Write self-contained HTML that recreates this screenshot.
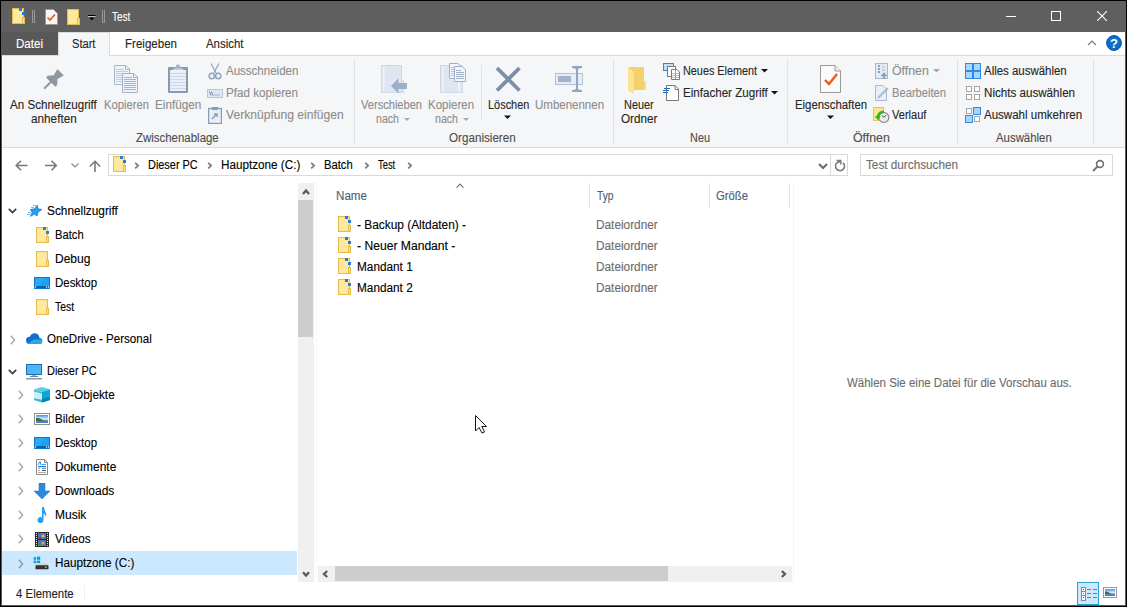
<!DOCTYPE html>
<html><head><meta charset="utf-8"><style>
html,body{margin:0;padding:0;width:1127px;height:607px;overflow:hidden;background:#000;}
body>div,body>span,body>svg{position:absolute;}
.t{font-family:"Liberation Sans",sans-serif;white-space:pre;line-height:14px;transform-origin:0 0;-webkit-text-stroke:0.12px currentColor;}
</style></head><body>
<div style="left:1px;top:1px;width:1125px;height:605px;background:#fff;box-sizing:border-box;border:1px solid #5c5c5c"></div>
<div style="left:1px;top:1px;width:1125px;height:31px;background:#5f5f5f;"></div>
<svg style="left:12px;top:8px" width="14" height="16" viewBox="0 0 14 16"><rect x="0.5" y="0.5" width="11" height="15" fill="#fde488" stroke="#e5bd4f"/><rect x="1.5" y="1.5" width="9" height="13" fill="#ffe9a0"/><rect x="10.5" y="9.5" width="2" height="6" fill="#fbe08a" stroke="#e5bd4f"/><rect x="7" y="0" width="3" height="3" fill="#2a7ad6"/><rect x="10" y="4" width="3" height="3" fill="#2a7ad6"/></svg>
<div style="left:32px;top:10px;width:3px;height:13px;background:transparent;box-sizing:border-box;border:1px solid #9a9a9a;border-top:none;border-radius:0 0 2px 2px"></div>
<svg style="left:45px;top:9px" width="13" height="16" viewBox="0 0 13 16"><path d="M0.5 0.5H8.5L12.5 4.5V15.5H0.5Z" fill="#f7f7f7" stroke="#9a9a9a"/><path d="M2.5 8.5L5 11L10 5.5" fill="none" stroke="#e8562a" stroke-width="1.6"/></svg>
<svg style="left:67px;top:9px" width="14" height="16" viewBox="0 0 14 16"><rect x="0.5" y="0.5" width="11" height="15" fill="#fde488" stroke="#e5bd4f"/><rect x="1.5" y="1.5" width="9" height="13" fill="#ffe9a0"/><rect x="10.5" y="9.5" width="2" height="6" fill="#fbe08a" stroke="#e5bd4f"/></svg>
<svg style="left:88px;top:14px" width="8" height="9" viewBox="0 0 8 9"><rect x="0" y="1" width="7.5" height="1" fill="#000"/><rect x="0" y="2" width="7.5" height="1" fill="#c8c8c8"/><path d="M0.8 3.2H6.8L3.8 7Z" fill="#000" stroke="#bbb" stroke-width="0.5" stroke-dasharray="0.8 0.8"/></svg>
<div style="left:102px;top:10px;width:3px;height:13px;background:transparent;box-sizing:border-box;border:1px solid #9a9a9a;border-top:none;border-radius:0 0 2px 2px"></div>
<span class="t" style="left:112.00px;top:10px;color:#fff;font-size:12px;transform:scaleX(0.8261)">Test</span>
<div style="left:1006px;top:16px;width:10px;height:1px;background:#fff;"></div>
<div style="left:1051px;top:11px;width:10px;height:10px;background:transparent;box-sizing:border-box;border:1px solid #fff"></div>
<svg style="left:1097px;top:11px" width="10" height="10" viewBox="0 0 10 10"><path d="M0 0L10 10M10 0L0 10" stroke="#fff" stroke-width="1.1"/></svg>
<div style="left:2px;top:32px;width:56px;height:23px;background:#585858;"></div>
<span class="t" style="left:16.00px;top:37px;color:#fff;font-size:12px;transform:scaleX(0.9643)">Datei</span>
<div style="left:58px;top:32px;width:52px;height:24px;background:#f5f6f7;box-sizing:border-box;border:1px solid #dadbdc;border-bottom:none"></div>
<span class="t" style="left:72.00px;top:37px;color:#262626;font-size:12px;transform:scaleX(0.9231)">Start</span>
<span class="t" style="left:125.00px;top:37px;color:#262626;font-size:12px;transform:scaleX(0.9630)">Freigeben</span>
<span class="t" style="left:206.00px;top:37px;color:#262626;font-size:12px;transform:scaleX(0.9500)">Ansicht</span>
<div style="left:2px;top:55px;width:56px;height:1px;background:#dadbdc;"></div>
<div style="left:110px;top:55px;width:1015px;height:1px;background:#dadbdc;"></div>
<div style="left:2px;top:56px;width:1123px;height:91px;background:#f5f6f7;"></div>
<div style="left:2px;top:147px;width:1123px;height:1px;background:#dadbdc;"></div>
<svg style="left:1087px;top:39px" width="10" height="7" viewBox="0 0 10 7"><path d="M1 6L5 2L9 6" fill="none" stroke="#7a7a7a" stroke-width="1.2"/></svg>
<svg style="left:1105px;top:34px" width="18" height="18" viewBox="0 0 18 18"><circle cx="9" cy="9" r="7.4" fill="#0a6ccb" stroke="#0b4f9a" stroke-width="1"/><text x="9" y="14" font-family="Liberation Sans" font-weight="bold" font-size="13" fill="#fff" text-anchor="middle">?</text></svg>
<div style="left:354px;top:59px;width:1px;height:85px;background:#e2e3e4;"></div>
<div style="left:613px;top:59px;width:1px;height:85px;background:#e2e3e4;"></div>
<div style="left:787px;top:59px;width:1px;height:85px;background:#e2e3e4;"></div>
<div style="left:957px;top:59px;width:1px;height:85px;background:#e2e3e4;"></div>
<div style="left:1093px;top:59px;width:1px;height:85px;background:#e2e3e4;"></div>
<div style="left:481px;top:65px;width:1px;height:55px;background:#e2e3e4;"></div>
<svg style="left:38px;top:62px" width="32" height="32" viewBox="0 0 32 32"><g transform="translate(22.6,10.2) rotate(45)" fill="#8e979f"><path d="M-4.6 0H4.6L2.6 7L6.6 11.5V14H-6.6V11.5L-2.6 7Z"/><rect x="-1" y="13" width="2" height="10.5" rx="0.8"/></g></svg>
<span class="t" style="left:10.00px;top:98px;color:#262626;font-size:12px;transform:scaleX(0.9667)">An Schnellzugriff</span>
<span class="t" style="left:31.00px;top:112px;color:#262626;font-size:12px;transform:scaleX(0.9787)">anheften</span>
<svg style="left:113px;top:64px" width="26" height="30" viewBox="0 0 26 30"><path d="M1.5 1.5H13L16.5 5V20.5H1.5Z" fill="#eef3fb" stroke="#a8b6cb"/><path d="M12.5 1.5V5.5H16.5" fill="none" stroke="#a8b6cb"/><path d="M3 5.5H11M3 7.5H15M3 9.5H15M3 11.5H15M3 13.5H15M3 15.5H15M3 17.5H15" stroke="#c3cede"/><path d="M9.5 9.5H21L24.5 13V28.5H9.5Z" fill="#eef3fb" stroke="#a3b2c8"/><path d="M20.5 9.5V13.5H24.5" fill="none" stroke="#a3b2c8"/><path d="M11 13.5H19M11 15.5H23M11 17.5H23M11 19.5H23M11 21.5H23M11 23.5H23M11 25.5H23" stroke="#a6b5ca"/></svg>
<span class="t" style="left:104.00px;top:98px;color:#8d8d8d;font-size:12px;transform:scaleX(0.9375)">Kopieren</span>
<svg style="left:168px;top:64px" width="20" height="30" viewBox="0 0 20 30"><rect x="0" y="3" width="20" height="26" rx="1" fill="#8b9ab3"/><rect x="2" y="6" width="16" height="21" fill="#eaf0fa"/><path d="M2 9.5H18M2 12.5H18M2 15.5H18M2 18.5H18M2 21.5H18M2 24.5H18" stroke="#cdd7e6"/><path d="M4 6L7 4H13L16 6Z" fill="#c3cedf"/><rect x="8" y="0.5" width="4" height="4" rx="1.5" fill="#a6b3c8"/></svg>
<span class="t" style="left:155.00px;top:98px;color:#8d8d8d;font-size:12px;transform:scaleX(0.9787)">Einfügen</span>
<svg style="left:208px;top:63px" width="15" height="17" viewBox="0 0 15 17"><path d="M3 0.5L8.2 10M11 0.5L5.8 10" stroke="#9aa8bf" stroke-width="1.3"/><ellipse cx="3.8" cy="13" rx="2.6" ry="2.8" fill="none" stroke="#95a4bc" stroke-width="1.6"/><ellipse cx="10.2" cy="13" rx="2.6" ry="2.8" fill="none" stroke="#95a4bc" stroke-width="1.6"/></svg>
<span class="t" style="left:226.00px;top:64px;color:#8d8d8d;font-size:12px;transform:scaleX(0.9600)">Ausschneiden</span>
<svg style="left:207px;top:89px" width="16" height="9" viewBox="0 0 16 9"><rect x="0.5" y="0.5" width="15" height="8" fill="#dfe7f2" stroke="#b9c6d8"/><path d="M2.5 2.5L4 6.5M4.5 2.5L6 6.5" stroke="#6f809c" stroke-width="0.9"/><path d="M7.5 6H8.5M9.5 6H10.5M11.5 6H12.5" stroke="#6f809c"/></svg>
<span class="t" style="left:226.00px;top:86px;color:#8d8d8d;font-size:12px;transform:scaleX(0.9730)">Pfad kopieren</span>
<svg style="left:208px;top:107px" width="14" height="17" viewBox="0 0 14 17"><rect x="0.5" y="1.5" width="13" height="15" fill="#e8eef7" stroke="#8b9ab3" stroke-width="1.4"/><rect x="4" y="0" width="6" height="3" fill="#8b9ab3"/><path d="M4 12L8 8M6 7H9V10" stroke="#8b9ab3" stroke-width="1.4" fill="none"/></svg>
<span class="t" style="left:226.00px;top:108px;color:#8d8d8d;font-size:12px;transform:scaleX(1.0085)">Verknüpfung einfügen</span>
<span class="t" style="left:136.00px;top:131px;color:#4d4d4d;font-size:12px;transform:scaleX(0.9540)">Zwischenablage</span>
<svg style="left:381px;top:64px" width="27" height="31" viewBox="0 0 27 31"><rect x="0.5" y="1.5" width="20" height="27" fill="#dfe6f2" stroke="#cfd8e6"/><rect x="2" y="2" width="1.5" height="26" fill="#eef2f8"/><rect x="20.5" y="16.5" width="2" height="12" fill="#e3e9f3" stroke="#cfd8e6"/><path d="M10 22L17.5 14.3V19H26V25H17.5V29.6Z" fill="#9cafc9"/></svg>
<span class="t" style="left:361.00px;top:98px;color:#8d8d8d;font-size:12px;transform:scaleX(0.9242)">Verschieben</span>
<span class="t" style="left:376.00px;top:112px;color:#8d8d8d;font-size:12px;transform:scaleX(0.8846)">nach</span>
<svg style="left:404px;top:118px" width="6" height="4" viewBox="0 0 6 4"><path d="M0 0H6L3 3Z" fill="#a8a8a8"/></svg>
<svg style="left:440px;top:63px" width="27" height="31" viewBox="0 0 27 31"><rect x="0.5" y="2.5" width="22" height="27" fill="#dfe6f2" stroke="#cfd8e6"/><rect x="2" y="3" width="1.5" height="26" fill="#eef2f8"/><rect x="18" y="3" width="2" height="26" fill="#eef2f8"/><path d="M9.5 0.5H18L20.5 3V15.5H9.5Z" fill="#f4f6fb" stroke="#9fb0c7"/><path d="M11 4.5H17M11 6.5H19M11 8.5H19M11 10.5H19M11 12.5H19" stroke="#b5c2d4"/><path d="M14.5 3.5H22L25.5 7V18.5H14.5Z" fill="#f4f6fb" stroke="#9fb0c7"/><path d="M16 7.5H21M16 9.5H24M16 11.5H24M16 13.5H24M16 15.5H24" stroke="#9fb0c7"/></svg>
<span class="t" style="left:428.00px;top:98px;color:#8d8d8d;font-size:12px;transform:scaleX(0.9583)">Kopieren</span>
<span class="t" style="left:435.00px;top:112px;color:#8d8d8d;font-size:12px;transform:scaleX(0.8846)">nach</span>
<svg style="left:463px;top:118px" width="6" height="4" viewBox="0 0 6 4"><path d="M0 0H6L3 3Z" fill="#a8a8a8"/></svg>
<svg style="left:494px;top:65px" width="28" height="28" viewBox="0 0 28 28"><path d="M3 3L25.5 25.5M25.5 3L3 25.5" stroke="#7f8ea8" stroke-width="3.8"/></svg>
<span class="t" style="left:488.00px;top:98px;color:#262626;font-size:12px;transform:scaleX(0.9111)">Löschen</span>
<svg style="left:504px;top:115px" width="7" height="5" viewBox="0 0 7 5"><path d="M0 0.5H7L3.5 4Z" fill="#111"/></svg>
<svg style="left:555px;top:65px" width="29" height="28" viewBox="0 0 29 28"><rect x="0.5" y="8.5" width="27" height="11" fill="#e6ecf6" stroke="#b3c1d6"/><rect x="3" y="11" width="13" height="6" fill="#a3b3cb"/><path d="M17 2H27M17 26H27M22 4V24M17 2Q22 2 22 5Q22 2 27 2M17 26Q22 26 22 23Q22 26 27 26" fill="none" stroke="#95a5bf" stroke-width="2"/></svg>
<span class="t" style="left:535.00px;top:98px;color:#8d8d8d;font-size:12px;transform:scaleX(0.9583)">Umbenennen</span>
<span class="t" style="left:449.00px;top:131px;color:#4d4d4d;font-size:12px;transform:scaleX(0.9710)">Organisieren</span>
<svg style="left:627px;top:66px" width="20" height="29" viewBox="0 0 20 29"><rect x="1" y="1" width="16" height="23" fill="#f3d16b"/><rect x="17" y="15" width="2" height="9" fill="#f9dc7c"/><path d="M1 1L7 6V28L1 25Z" fill="#fbe390"/></svg>
<span class="t" style="left:624.00px;top:98px;color:#262626;font-size:12px;transform:scaleX(0.9091)">Neuer</span>
<span class="t" style="left:621.00px;top:112px;color:#262626;font-size:12px;transform:scaleX(0.9730)">Ordner</span>
<svg style="left:662px;top:62px" width="18" height="18" viewBox="0 0 18 18"><rect x="1.5" y="1.5" width="10" height="7" fill="#bfe0f7" stroke="#3c83c8"/><rect x="5.5" y="4.5" width="8" height="10" fill="#fafafa" stroke="#7a7a7a"/><path d="M9.5 7.5H15L17.5 10V17.5H9.5Z" fill="#fff" stroke="#7a7a7a"/><path d="M10 11.5H17M10 13.5H17M10 15.5H17" stroke="#9cc3ea"/><path d="M13.5 8V17" stroke="#f08080"/></svg>
<span class="t" style="left:683.00px;top:64px;color:#262626;font-size:12px;transform:scaleX(0.9036)">Neues Element</span>
<svg style="left:761px;top:69px" width="7" height="4" viewBox="0 0 7 4"><path d="M0 0H7L3.5 3.5Z" fill="#111"/></svg>
<svg style="left:662px;top:84px" width="17" height="17" viewBox="0 0 17 17"><path d="M4.5 1.5H13L16.5 5V16.5H4.5Z" fill="#fff" stroke="#7a7a7a"/><path d="M13 1.5V5.5H16.5" fill="none" stroke="#7a7a7a"/><path d="M2 4.5H8M1 6.5H7M1 8.5H6" stroke="#1f6cc0" stroke-width="1"/></svg>
<span class="t" style="left:683.00px;top:86px;color:#262626;font-size:12px;transform:scaleX(0.9659)">Einfacher Zugriff</span>
<svg style="left:771px;top:91px" width="7" height="4" viewBox="0 0 7 4"><path d="M0 0H7L3.5 3.5Z" fill="#111"/></svg>
<span class="t" style="left:690.00px;top:131px;color:#4d4d4d;font-size:12px;transform:scaleX(0.9091)">Neu</span>
<svg style="left:820px;top:65px" width="22" height="29" viewBox="0 0 22 29"><path d="M0.5 0.5H15L20.5 6V27.5H0.5Z" fill="#fafafa" stroke="#9a9a9a"/><path d="M15 0.5V6H20.5" fill="#eee" stroke="#9a9a9a"/><path d="M5 15L9 19L17 9" fill="none" stroke="#ea5a1d" stroke-width="2.4"/></svg>
<span class="t" style="left:795.00px;top:98px;color:#262626;font-size:12px;transform:scaleX(0.9474)">Eigenschaften</span>
<svg style="left:827px;top:115px" width="7" height="5" viewBox="0 0 7 5"><path d="M0 0.5H7L3.5 4Z" fill="#111"/></svg>
<svg style="left:875px;top:63px" width="15" height="17" viewBox="0 0 15 17"><rect x="0.5" y="0.5" width="12" height="15" fill="#e4eaf4" stroke="#a9b8cc"/><path d="M3 3H5M3 6H5M3 9H5" stroke="#8fa2bd" stroke-width="2"/><path d="M7 4H10M7 7H10" stroke="#a9b8cc"/><path d="M9 16V11L6.5 13M9 11L11.5 13" stroke="#8fa2bd" stroke-width="2" fill="none"/></svg>
<span class="t" style="left:892.00px;top:64px;color:#8d8d8d;font-size:12px;transform:scaleX(1.0278)">Öffnen</span>
<svg style="left:933px;top:69px" width="7" height="4" viewBox="0 0 7 4"><path d="M0 0H7L3.5 3.5Z" fill="#a8a8a8"/></svg>
<svg style="left:875px;top:85px" width="15" height="16" viewBox="0 0 15 16"><path d="M0.5 0.5H8L11.5 4V15.5H0.5Z" fill="#e8eef7" stroke="#a9b8cc"/><path d="M3 13L13 3" stroke="#a9b8cc" stroke-width="2"/></svg>
<span class="t" style="left:892.00px;top:86px;color:#8d8d8d;font-size:12px;transform:scaleX(0.9310)">Bearbeiten</span>
<svg style="left:872px;top:106px" width="19" height="19" viewBox="0 0 19 19"><rect x="1.5" y="1.5" width="10" height="13" fill="#fde58f" stroke="#eec357"/><circle cx="11.8" cy="11.4" r="5" fill="#ececec" stroke="#8a8a8a" stroke-width="1.2"/><path d="M11.8 11.4L10.2 9.6M11.8 11.4L14 9.2" stroke="#333" stroke-width="0.9"/><path d="M12 5.8Q6.5 6.2 5.8 11" fill="none" stroke="#2db52d" stroke-width="2.4"/><path d="M2.8 10.2H8.8L5.8 14Z" fill="#2db52d"/></svg>
<span class="t" style="left:892.00px;top:108px;color:#262626;font-size:12px;transform:scaleX(0.9211)">Verlauf</span>
<span class="t" style="left:853.00px;top:131px;color:#4d4d4d;font-size:12px;transform:scaleX(1.0278)">Öffnen</span>
<svg style="left:965px;top:63px" width="16" height="16" viewBox="0 0 16 16"><rect x="0.5" y="0.5" width="7" height="7" fill="#a9d5f8" stroke="#2d8ae6"/><rect x="8.5" y="0.5" width="7" height="7" fill="#a9d5f8" stroke="#2d8ae6"/><rect x="0.5" y="8.5" width="7" height="7" fill="#a9d5f8" stroke="#2d8ae6"/><rect x="8.5" y="8.5" width="7" height="7" fill="#a9d5f8" stroke="#2d8ae6"/></svg>
<span class="t" style="left:984.00px;top:64px;color:#262626;font-size:12px;transform:scaleX(0.9540)">Alles auswählen</span>
<svg style="left:965px;top:85px" width="16" height="16" viewBox="0 0 16 16"><rect x="1.5" y="1.5" width="5" height="5" fill="#fff" stroke="#a5a5a5"/><rect x="9.5" y="1.5" width="5" height="5" fill="#fff" stroke="#a5a5a5"/><rect x="1.5" y="9.5" width="5" height="5" fill="#fff" stroke="#a5a5a5"/><rect x="9.5" y="9.5" width="5" height="5" fill="#fff" stroke="#a5a5a5"/></svg>
<span class="t" style="left:984.00px;top:86px;color:#262626;font-size:12px;transform:scaleX(0.9681)">Nichts auswählen</span>
<svg style="left:965px;top:107px" width="16" height="16" viewBox="0 0 16 16"><rect x="1.5" y="1.5" width="5" height="5" fill="#fff" stroke="#a5a5a5"/><rect x="8.5" y="0.5" width="7" height="7" fill="#a9d5f8" stroke="#2d8ae6"/><rect x="0.5" y="8.5" width="7" height="7" fill="#a9d5f8" stroke="#2d8ae6"/><rect x="9.5" y="9.5" width="5" height="5" fill="#fff" stroke="#a5a5a5"/></svg>
<span class="t" style="left:984.00px;top:108px;color:#262626;font-size:12px;transform:scaleX(0.9608)">Auswahl umkehren</span>
<span class="t" style="left:996.00px;top:131px;color:#4d4d4d;font-size:12px;transform:scaleX(0.9492)">Auswählen</span>
<svg style="left:15px;top:160px" width="13" height="11" viewBox="0 0 13 11"><path d="M1 5.5H12.5M6 0.8L1.2 5.5L6 10.2" fill="none" stroke="#7a7a7a" stroke-width="1.6"/></svg>
<svg style="left:45px;top:160px" width="13" height="11" viewBox="0 0 13 11"><path d="M0 5.5H11.5M6.5 0.8L11.3 5.5L6.5 10.2" fill="none" stroke="#7a7a7a" stroke-width="1.6"/></svg>
<svg style="left:71px;top:163px" width="8" height="5" viewBox="0 0 8 5"><path d="M0.5 0.5L4 4L7.5 0.5" fill="none" stroke="#8a8a8a" stroke-width="1.2"/></svg>
<svg style="left:89px;top:160px" width="12" height="12" viewBox="0 0 12 12"><path d="M6 12V1.5M0.8 6.5L6 1.3L11.2 6.5" fill="none" stroke="#7a7a7a" stroke-width="1.6"/></svg>
<div style="left:108px;top:154px;width:740px;height:22px;background:#fff;box-sizing:border-box;border:1px solid #d9d9d9"></div>
<div style="left:830px;top:155px;width:1px;height:20px;background:#d9d9d9;"></div>
<svg style="left:113px;top:156px" width="14" height="16" viewBox="0 0 14 16"><rect x="0.5" y="0.5" width="11" height="15" fill="#fde488" stroke="#e5bd4f"/><rect x="1.5" y="1.5" width="9" height="13" fill="#ffe9a0"/><rect x="10.5" y="9.5" width="2" height="6" fill="#fbe08a" stroke="#e5bd4f"/><rect x="7" y="0" width="3" height="3" fill="#2a7ad6"/><rect x="10" y="4" width="3" height="3" fill="#2a7ad6"/></svg>
<svg style="left:134px;top:162px" width="6" height="8" viewBox="0 0 6 8"><path d="M1.2 0.8L4.2 3.6L1.2 6.4" fill="none" stroke="#7a7a7a" stroke-width="1.7"/></svg>
<svg style="left:207px;top:162px" width="6" height="8" viewBox="0 0 6 8"><path d="M1.2 0.8L4.2 3.6L1.2 6.4" fill="none" stroke="#7a7a7a" stroke-width="1.7"/></svg>
<svg style="left:310px;top:162px" width="6" height="8" viewBox="0 0 6 8"><path d="M1.2 0.8L4.2 3.6L1.2 6.4" fill="none" stroke="#7a7a7a" stroke-width="1.7"/></svg>
<svg style="left:364px;top:162px" width="6" height="8" viewBox="0 0 6 8"><path d="M1.2 0.8L4.2 3.6L1.2 6.4" fill="none" stroke="#7a7a7a" stroke-width="1.7"/></svg>
<svg style="left:407px;top:162px" width="6" height="8" viewBox="0 0 6 8"><path d="M1.2 0.8L4.2 3.6L1.2 6.4" fill="none" stroke="#7a7a7a" stroke-width="1.7"/></svg>
<span class="t" style="left:148.00px;top:158px;color:#000;font-size:12px;transform:scaleX(0.9091)">Dieser PC</span>
<span class="t" style="left:221.00px;top:158px;color:#000;font-size:12px;transform:scaleX(0.9753)">Hauptzone (C:)</span>
<span class="t" style="left:324.00px;top:158px;color:#000;font-size:12px;transform:scaleX(0.9355)">Batch</span>
<span class="t" style="left:378.00px;top:158px;color:#000;font-size:12px;transform:scaleX(0.7826)">Test</span>
<svg style="left:818px;top:163px" width="10" height="7" viewBox="0 0 10 7"><path d="M1 1L5 5L9 1" fill="none" stroke="#6d6d6d" stroke-width="2"/></svg>
<svg style="left:834px;top:159px" width="13" height="13" viewBox="0 0 13 13"><path d="M6 2.6A4.5 4.5 0 1 0 9.2 3.9" fill="none" stroke="#7a7a7a" stroke-width="1.6"/><path d="M2.6 1.6H6.8V5.6" fill="none" stroke="#7a7a7a" stroke-width="1.5"/></svg>
<div style="left:860px;top:154px;width:253px;height:22px;background:#fff;box-sizing:border-box;border:1px solid #d9d9d9"></div>
<span class="t" style="left:866.00px;top:158px;color:#6d6d6d;font-size:12px;transform:scaleX(0.9787)">Test durchsuchen</span>
<svg style="left:1091px;top:159px" width="14" height="14" viewBox="0 0 14 14"><circle cx="9" cy="5" r="3.4" fill="none" stroke="#707070" stroke-width="1.6"/><path d="M6.5 7.5L2 12" stroke="#707070" stroke-width="1.8"/></svg>
<svg style="left:8px;top:208px" width="9" height="6" viewBox="0 0 9 6"><path d="M0.8 0.8L4.5 4.5L8.2 0.8" fill="none" stroke="#3c3c3c" stroke-width="1.7"/></svg>
<svg style="left:26px;top:203px" width="17" height="15" viewBox="0 0 17 15"><path d="M11.4 2L12.07 5.79L16 6.5L12 9.2L11.2 13L8.38 11.34L4.3 13.4L6.18 9.32L4.1 6.5L8.38 5.79Z" fill="#2a9bef" stroke="#1b7fd6" stroke-width="0.7" stroke-linejoin="round"/><path d="M7 2.5H10M5 4.5H8M2 9.5H5M1 11.5H4" stroke="#6ab8f2" stroke-width="0.9"/></svg>
<span class="t" style="left:47.00px;top:204px;color:#000;font-size:12px;transform:scaleX(0.9861)">Schnellzugriff</span>
<svg style="left:36px;top:227px" width="14" height="16" viewBox="0 0 14 16"><rect x="0.5" y="0.5" width="11" height="15" fill="#fde488" stroke="#e5bd4f"/><rect x="1.5" y="1.5" width="9" height="13" fill="#ffe9a0"/><rect x="10.5" y="9.5" width="2" height="6" fill="#fbe08a" stroke="#e5bd4f"/><rect x="7" y="0" width="3" height="3" fill="#2a7ad6"/><rect x="10" y="4" width="3" height="3" fill="#2a7ad6"/></svg>
<span class="t" style="left:55.00px;top:228px;color:#000;font-size:12px;transform:scaleX(0.9355)">Batch</span>
<svg style="left:36px;top:251px" width="14" height="16" viewBox="0 0 14 16"><rect x="0.5" y="0.5" width="11" height="15" fill="#fde488" stroke="#e5bd4f"/><rect x="1.5" y="1.5" width="9" height="13" fill="#ffe9a0"/><rect x="10.5" y="9.5" width="2" height="6" fill="#fbe08a" stroke="#e5bd4f"/></svg>
<span class="t" style="left:55.00px;top:252px;color:#000;font-size:12px;transform:scaleX(1.0000)">Debug</span>
<svg style="left:34px;top:277px" width="16" height="12" viewBox="0 0 16 12"><rect x="0.5" y="0.5" width="15" height="11" fill="#1ea0f5" stroke="#0b78d0"/><path d="M1 1H10L4 11H1Z" fill="#2aa8f7"/><rect x="1" y="9" width="14" height="2" fill="#0b5fa8"/><circle cx="1.5" cy="10" r="0.7" fill="#fff"/><circle cx="12.5" cy="10" r="0.7" fill="#fff"/><circle cx="14.5" cy="10" r="0.7" fill="#fff"/></svg>
<svg style="left:34px;top:437px" width="16" height="12" viewBox="0 0 16 12"><rect x="0.5" y="0.5" width="15" height="11" fill="#1ea0f5" stroke="#0b78d0"/><path d="M1 1H10L4 11H1Z" fill="#2aa8f7"/><rect x="1" y="9" width="14" height="2" fill="#0b5fa8"/><circle cx="1.5" cy="10" r="0.7" fill="#fff"/><circle cx="12.5" cy="10" r="0.7" fill="#fff"/><circle cx="14.5" cy="10" r="0.7" fill="#fff"/></svg>
<span class="t" style="left:55.00px;top:276px;color:#000;font-size:12px;transform:scaleX(0.9545)">Desktop</span>
<svg style="left:36px;top:299px" width="14" height="16" viewBox="0 0 14 16"><rect x="0.5" y="0.5" width="11" height="15" fill="#fde488" stroke="#e5bd4f"/><rect x="1.5" y="1.5" width="9" height="13" fill="#ffe9a0"/><rect x="10.5" y="9.5" width="2" height="6" fill="#fbe08a" stroke="#e5bd4f"/></svg>
<span class="t" style="left:55.00px;top:300px;color:#000;font-size:12px;transform:scaleX(0.8696)">Test</span>
<svg style="left:10px;top:335px" width="6" height="10" viewBox="0 0 6 10"><path d="M0.8 0.8L4.6 5L0.8 9.2" fill="none" stroke="#a6a6a6" stroke-width="1.4"/></svg>
<svg style="left:26px;top:333px" width="17" height="12" viewBox="0 0 17 12"><defs><clipPath id="cl"><circle cx="3.6" cy="7.3" r="3.6"/><circle cx="8.6" cy="5" r="4.8"/><circle cx="13.3" cy="8" r="3"/><rect x="3.6" y="7" width="9.7" height="4"/></clipPath></defs><g clip-path="url(#cl)"><rect x="0" y="0" width="17" height="12" fill="#1070cc"/><path d="M1 11.5L7 6.8Q9 5.8 12 6.5L17 6.5V12H1Z" fill="#2aa6ea"/></g></svg>
<span class="t" style="left:47.00px;top:332px;color:#000;font-size:12px;transform:scaleX(0.9633)">OneDrive - Personal</span>
<svg style="left:8px;top:369px" width="9" height="6" viewBox="0 0 9 6"><path d="M0.8 0.8L4.5 4.5L8.2 0.8" fill="none" stroke="#3c3c3c" stroke-width="1.7"/></svg>
<svg style="left:26px;top:364px" width="16" height="16" viewBox="0 0 16 16"><rect x="0.5" y="0.5" width="15" height="10" fill="#4fb6f5" stroke="#1f6fb0"/><rect x="6" y="11" width="4" height="1" fill="#b0b0b0"/><rect x="4" y="12" width="8" height="1" fill="#6e8098"/><rect x="0" y="14" width="16" height="1.5" fill="#8a98aa"/></svg>
<span class="t" style="left:47.00px;top:364px;color:#000;font-size:12px;transform:scaleX(0.9091)">Dieser PC</span>
<svg style="left:18px;top:390px" width="6" height="10" viewBox="0 0 6 10"><path d="M0.8 0.8L4.6 5L0.8 9.2" fill="none" stroke="#a6a6a6" stroke-width="1.4"/></svg>
<span class="t" style="left:55.00px;top:388px;color:#000;font-size:12px;transform:scaleX(0.9836)">3D-Objekte</span>
<svg style="left:18px;top:414px" width="6" height="10" viewBox="0 0 6 10"><path d="M0.8 0.8L4.6 5L0.8 9.2" fill="none" stroke="#a6a6a6" stroke-width="1.4"/></svg>
<span class="t" style="left:55.00px;top:412px;color:#000;font-size:12px;transform:scaleX(0.9677)">Bilder</span>
<svg style="left:18px;top:438px" width="6" height="10" viewBox="0 0 6 10"><path d="M0.8 0.8L4.6 5L0.8 9.2" fill="none" stroke="#a6a6a6" stroke-width="1.4"/></svg>
<span class="t" style="left:55.00px;top:436px;color:#000;font-size:12px;transform:scaleX(0.9545)">Desktop</span>
<svg style="left:18px;top:462px" width="6" height="10" viewBox="0 0 6 10"><path d="M0.8 0.8L4.6 5L0.8 9.2" fill="none" stroke="#a6a6a6" stroke-width="1.4"/></svg>
<span class="t" style="left:55.00px;top:460px;color:#000;font-size:12px;transform:scaleX(1.0000)">Dokumente</span>
<svg style="left:18px;top:486px" width="6" height="10" viewBox="0 0 6 10"><path d="M0.8 0.8L4.6 5L0.8 9.2" fill="none" stroke="#a6a6a6" stroke-width="1.4"/></svg>
<span class="t" style="left:55.00px;top:484px;color:#000;font-size:12px;transform:scaleX(1.0000)">Downloads</span>
<svg style="left:18px;top:510px" width="6" height="10" viewBox="0 0 6 10"><path d="M0.8 0.8L4.6 5L0.8 9.2" fill="none" stroke="#a6a6a6" stroke-width="1.4"/></svg>
<span class="t" style="left:55.00px;top:508px;color:#000;font-size:12px;transform:scaleX(1.0000)">Musik</span>
<svg style="left:18px;top:534px" width="6" height="10" viewBox="0 0 6 10"><path d="M0.8 0.8L4.6 5L0.8 9.2" fill="none" stroke="#a6a6a6" stroke-width="1.4"/></svg>
<span class="t" style="left:55.00px;top:532px;color:#000;font-size:12px;transform:scaleX(0.9722)">Videos</span>
<svg style="left:34px;top:386px" width="16" height="17" viewBox="0 0 16 17"><path d="M0 3.5L8 1L16 3.5L8 6Z" fill="#58cce2"/><path d="M0 3.5L8 6V16.5L0 14Z" fill="#cdeef6"/><path d="M0 3.5L8 6V7.8L0 5.6Z" fill="#3fc0da"/><path d="M0 12.2L8 13.8V16.5L0 14Z" fill="#3ab6d2"/><path d="M8 6L16 3.5V14L8 16.5Z" fill="#0aa6d6"/><path d="M8 12.8L16 11V14L8 16.5Z" fill="#0a84ae"/></svg>
<svg style="left:34px;top:413px" width="16" height="12" viewBox="0 0 16 12"><defs><linearGradient id="sky" x1="0" y1="0" x2="0" y2="1"><stop offset="0" stop-color="#4a8ee8"/><stop offset="0.5" stop-color="#d8ecf8"/><stop offset="1" stop-color="#5a8ac8"/></linearGradient></defs><rect x="0.5" y="0.5" width="15" height="11" fill="#fff" stroke="#8e8e8e"/><rect x="2" y="2" width="12" height="8" fill="url(#sky)"/><path d="M2 5Q5 4.5 7 6T14 7.5V8H2Z" fill="#3e7048"/><rect x="2" y="8" width="12" height="2" fill="#4f7fc0"/></svg>
<svg style="left:36px;top:459px" width="12" height="16" viewBox="0 0 12 16"><path d="M0.5 0.5H8.5L11.5 3.5V15.5H0.5Z" fill="#fff" stroke="#8a8a8a"/><path d="M8.5 0.5V3.5H11.5" fill="none" stroke="#8a8a8a"/><path d="M2 6L4 2.5L5 6" stroke="#2a8ad8" fill="none"/><rect x="6" y="5" width="4" height="1" fill="#4aa0e0"/><rect x="2" y="7" width="8" height="1.2" fill="#1a7ad0"/><rect x="2" y="9" width="2" height="1" fill="#aaa"/><rect x="6" y="9" width="4" height="1" fill="#5a90e8"/><rect x="2" y="11" width="2" height="1" fill="#aaa"/><rect x="6" y="11" width="4" height="1" fill="#2f5a3a"/><rect x="2" y="13" width="8" height="1" fill="#aaa"/></svg>
<svg style="left:34px;top:483px" width="16" height="16" viewBox="0 0 16 16"><path d="M5 0H11V8H16L8 16L0 8H5Z" fill="#2a8ae0" stroke="#1d6fc0" stroke-width="0.5"/></svg>
<svg style="left:36px;top:507px" width="11" height="16" viewBox="0 0 11 16"><path d="M6 0H8C8 4 11 5 10 10C9.5 8 8 6.5 7.5 6.5V13A3 3 0 1 1 6 10.5Z" fill="#1ea0f5"/></svg>
<svg style="left:35px;top:532px" width="14" height="15" viewBox="0 0 14 15"><rect x="0" y="0" width="14" height="15" fill="#2a2a2a"/><rect x="3" y="1" width="8" height="6" fill="#3f78c8"/><rect x="3" y="8" width="8" height="6" fill="#3f78c8"/><path d="M3 5H7V7H3Z" fill="#c0392b"/><circle cx="8" cy="4" r="1.6" fill="#e5c03a"/><path d="M3 12H6V14H3Z" fill="#4a9a3a"/><circle cx="8" cy="11" r="1.6" fill="#e5a03a"/><path d="M1.5 1V14.5M12.5 1V14.5" stroke="#e8e8e8" stroke-width="1" stroke-dasharray="1 1"/></svg>
<div style="left:2px;top:551px;width:295px;height:24px;background:#cce8ff;"></div>
<svg style="left:18px;top:559px" width="6" height="10" viewBox="0 0 6 10"><path d="M0.8 0.8L4.6 5L0.8 9.2" fill="none" stroke="#8a99a6" stroke-width="1.4"/></svg>
<svg style="left:33px;top:556px" width="17" height="15" viewBox="0 0 17 15"><rect x="0.6" y="1.2" width="2.6" height="2.6" fill="#00a2ed"/><rect x="4" y="0.6" width="3.2" height="3.2" fill="#00a2ed"/><rect x="0.6" y="4.6" width="2.6" height="2.6" fill="#00a2ed"/><rect x="4" y="4.6" width="3.2" height="3.2" fill="#00a2ed"/><path d="M3.5 7H13.5L15.5 9.5H2.5Z" fill="#d4d4d4"/><rect x="2.5" y="9.2" width="13" height="4" rx="0.8" fill="#2e2e2e"/><path d="M3.5 11H11" stroke="#4a4a4a" stroke-width="0.6"/><circle cx="12.8" cy="11.2" r="1" fill="#43e043"/></svg>
<span class="t" style="left:55.00px;top:556px;color:#000;font-size:12px;transform:scaleX(0.9753)">Hauptzone (C:)</span>
<div style="left:298px;top:183px;width:16px;height:399px;background:#f0f0f0;"></div>
<div style="left:298px;top:200px;width:15px;height:137px;background:#cdcdcd;"></div>
<svg style="left:302px;top:188px" width="8" height="8" viewBox="0 0 8 8"><path d="M1 6L4 2.6L7 6" fill="none" stroke="#5a5a5a" stroke-width="2.3"/></svg>
<svg style="left:302px;top:571px" width="8" height="8" viewBox="0 0 8 8"><path d="M1 1.2L4 4.6L7 1.2" fill="none" stroke="#5a5a5a" stroke-width="2.3"/></svg>
<div style="left:316px;top:183px;width:1px;height:399px;background:#f7f7f7;"></div>
<span class="t" style="left:336.00px;top:189px;color:#4c607a;font-size:12px;transform:scaleX(0.9688)">Name</span>
<svg style="left:456px;top:183px" width="8" height="6" viewBox="0 0 8 6"><path d="M0.6 4.6L4 1.2L7.4 4.6" fill="none" stroke="#707070" stroke-width="1.2"/></svg>
<div style="left:589px;top:183px;width:1px;height:25px;background:#e5e5e5;"></div>
<span class="t" style="left:597.00px;top:189px;color:#4c607a;font-size:12px;transform:scaleX(0.8500)">Typ</span>
<div style="left:709px;top:183px;width:1px;height:25px;background:#e5e5e5;"></div>
<span class="t" style="left:716.00px;top:189px;color:#4c607a;font-size:12px;transform:scaleX(0.9412)">Größe</span>
<div style="left:789px;top:183px;width:1px;height:25px;background:#e5e5e5;"></div>
<svg style="left:338px;top:216px" width="14" height="16" viewBox="0 0 14 16"><rect x="0.5" y="0.5" width="11" height="15" fill="#fde488" stroke="#e5bd4f"/><rect x="1.5" y="1.5" width="9" height="13" fill="#ffe9a0"/><rect x="10.5" y="9.5" width="2" height="6" fill="#fbe08a" stroke="#e5bd4f"/><rect x="7" y="0" width="3" height="3" fill="#2a7ad6"/><rect x="10" y="4" width="3" height="3" fill="#2a7ad6"/></svg>
<span class="t" style="left:357.00px;top:218px;color:#000;font-size:12px;transform:scaleX(0.9909)">- Backup (Altdaten) -</span>
<span class="t" style="left:596.00px;top:218px;color:#6d6d6d;font-size:12px;transform:scaleX(0.9841)">Dateiordner</span>
<svg style="left:338px;top:237px" width="14" height="16" viewBox="0 0 14 16"><rect x="0.5" y="0.5" width="11" height="15" fill="#fde488" stroke="#e5bd4f"/><rect x="1.5" y="1.5" width="9" height="13" fill="#ffe9a0"/><rect x="10.5" y="9.5" width="2" height="6" fill="#fbe08a" stroke="#e5bd4f"/><rect x="7" y="0" width="3" height="3" fill="#2a7ad6"/><rect x="10" y="4" width="3" height="3" fill="#2a7ad6"/></svg>
<span class="t" style="left:357.00px;top:239px;color:#000;font-size:12px;transform:scaleX(1.0103)">- Neuer Mandant -</span>
<span class="t" style="left:596.00px;top:239px;color:#6d6d6d;font-size:12px;transform:scaleX(0.9841)">Dateiordner</span>
<svg style="left:338px;top:258px" width="14" height="16" viewBox="0 0 14 16"><rect x="0.5" y="0.5" width="11" height="15" fill="#fde488" stroke="#e5bd4f"/><rect x="1.5" y="1.5" width="9" height="13" fill="#ffe9a0"/><rect x="10.5" y="9.5" width="2" height="6" fill="#fbe08a" stroke="#e5bd4f"/><rect x="7" y="0" width="3" height="3" fill="#2a7ad6"/><rect x="10" y="4" width="3" height="3" fill="#2a7ad6"/></svg>
<span class="t" style="left:357.00px;top:260px;color:#000;font-size:12px;transform:scaleX(0.9825)">Mandant 1</span>
<span class="t" style="left:596.00px;top:260px;color:#6d6d6d;font-size:12px;transform:scaleX(0.9841)">Dateiordner</span>
<svg style="left:338px;top:279px" width="14" height="16" viewBox="0 0 14 16"><rect x="0.5" y="0.5" width="11" height="15" fill="#fde488" stroke="#e5bd4f"/><rect x="1.5" y="1.5" width="9" height="13" fill="#ffe9a0"/><rect x="10.5" y="9.5" width="2" height="6" fill="#fbe08a" stroke="#e5bd4f"/><rect x="7" y="0" width="3" height="3" fill="#2a7ad6"/><rect x="10" y="4" width="3" height="3" fill="#2a7ad6"/></svg>
<span class="t" style="left:357.00px;top:281px;color:#000;font-size:12px;transform:scaleX(0.9825)">Mandant 2</span>
<span class="t" style="left:596.00px;top:281px;color:#6d6d6d;font-size:12px;transform:scaleX(0.9841)">Dateiordner</span>
<div style="left:318px;top:566px;width:474px;height:16px;background:#f0f0f0;"></div>
<div style="left:335px;top:566px;width:333px;height:15px;background:#cdcdcd;"></div>
<svg style="left:321px;top:570px" width="8" height="8" viewBox="0 0 8 8"><path d="M6.2 1L3 4L6.2 7" fill="none" stroke="#5a5a5a" stroke-width="2.3"/></svg>
<svg style="left:780px;top:570px" width="8" height="8" viewBox="0 0 8 8"><path d="M1.8 1L5 4L1.8 7" fill="none" stroke="#5a5a5a" stroke-width="2.3"/></svg>
<div style="left:793px;top:183px;width:1px;height:399px;background:#f4f4f4;"></div>
<span class="t" style="left:847.00px;top:376px;color:#6d6d6d;font-size:12px;transform:scaleX(0.9574)">Wählen Sie eine Datei für die Vorschau aus.</span>
<svg style="left:474px;top:414px" width="14" height="20" viewBox="0 0 14 20"><path d="M1.5 1.5V17L5 13.5L8 19L10.5 18L7.8 12.5H12.5Z" fill="#fff" stroke="#151520" stroke-width="1" stroke-linejoin="round"/></svg>
<span class="t" style="left:16.00px;top:587px;color:#1e1e1e;font-size:12px;transform:scaleX(0.9508)">4 Elemente</span>
<div style="left:84px;top:585px;width:1px;height:15px;background:#f0f0f0;"></div>
<svg style="left:1077px;top:582px" width="22" height="23" viewBox="0 0 22 23"><rect x="0.5" y="0.5" width="21" height="22" fill="#cce8ff" stroke="#26a0da"/><rect x="4.5" y="5.5" width="4" height="13" fill="#fff" stroke="#8a8a8a"/><path d="M4.5 9.5H8.5M4.5 13.5H8.5" stroke="#8a8a8a"/><rect x="6" y="7" width="1" height="1" fill="#2a6a2a"/><rect x="6" y="11" width="1" height="1" fill="#4a7ae0"/><rect x="6" y="15" width="1" height="1" fill="#e02020"/><path d="M10 7.5H14M16 7.5H20M10 11.5H14M16 11.5H20M10 15.5H14M16 15.5H20" stroke="#7a7a7a" stroke-width="1.2"/></svg>
<svg style="left:1103px;top:587px" width="14" height="11" viewBox="0 0 14 11"><defs><linearGradient id="sky2" x1="0" y1="0" x2="0" y2="1"><stop offset="0" stop-color="#4a8ee8"/><stop offset="0.5" stop-color="#d8ecf8"/><stop offset="1" stop-color="#5a8ac8"/></linearGradient></defs><rect x="0.5" y="0.5" width="13" height="10" fill="#fff" stroke="#9a9a9a"/><rect x="2" y="2" width="10" height="7" fill="url(#sky2)"/><path d="M2 4.5Q4.5 4 6 5.5T12 6.8V7.2H2Z" fill="#3e7048"/><rect x="2" y="7.2" width="10" height="1.8" fill="#4f7fc0"/></svg>
</body></html>
